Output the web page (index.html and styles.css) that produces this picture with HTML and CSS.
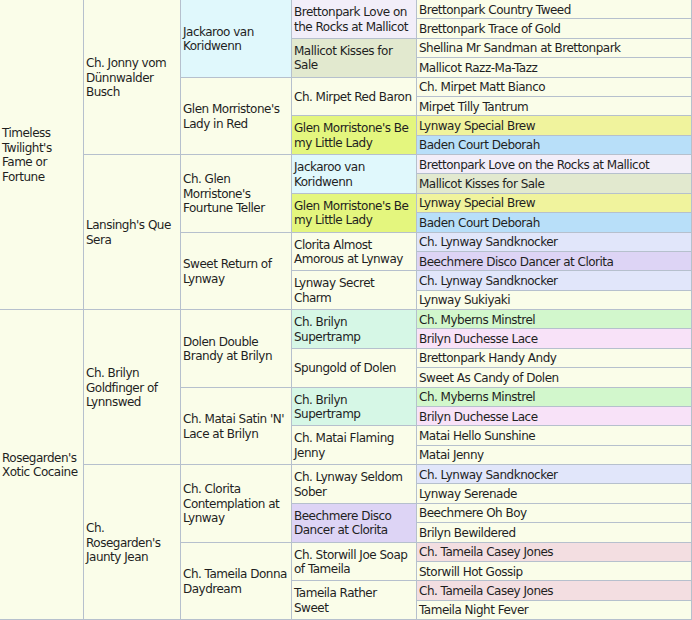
FILE: index.html
```html
<!DOCTYPE html>
<html lang="en">
<head>
<meta charset="utf-8">
<title>Pedigree</title>
<link rel="stylesheet" href="styles.css">
</head>
<body>
<div class="pedigree">
  <div class="cell g1">Timeless Twilight's Fame or Fortune</div>
  <div class="cell g2">Ch. Jonny vom Dünnwalder Busch</div>
  <div class="cell g3 c-cyan">Jackaroo van Koridwenn</div>
  <div class="cell g4 c-lav">Brettonpark Love on the Rocks at Mallicot</div>
  <div class="cell g5">Brettonpark Country Tweed</div>
  <div class="cell g5">Brettonpark Trace of Gold</div>
  <div class="cell g4 c-sage">Mallicot Kisses for Sale</div>
  <div class="cell g5">Shellina Mr Sandman at Brettonpark</div>
  <div class="cell g5">Mallicot Razz-Ma-Tazz</div>
  <div class="cell g3">Glen Morristone's Lady in Red</div>
  <div class="cell g4">Ch. Mirpet Red Baron</div>
  <div class="cell g5">Ch. Mirpet Matt Bianco</div>
  <div class="cell g5">Mirpet Tilly Tantrum</div>
  <div class="cell g4 c-lime">Glen Morristone's Be my Little Lady</div>
  <div class="cell g5 c-yellow">Lynway Special Brew</div>
  <div class="cell g5 c-blue">Baden Court Deborah</div>
  <div class="cell g2">Lansingh's Que Sera</div>
  <div class="cell g3">Ch. Glen Morristone's Fourtune Teller</div>
  <div class="cell g4 c-cyan">Jackaroo van Koridwenn</div>
  <div class="cell g5 c-lav">Brettonpark Love on the Rocks at Mallicot</div>
  <div class="cell g5 c-sage">Mallicot Kisses for Sale</div>
  <div class="cell g4 c-lime">Glen Morristone's Be my Little Lady</div>
  <div class="cell g5 c-yellow">Lynway Special Brew</div>
  <div class="cell g5 c-blue">Baden Court Deborah</div>
  <div class="cell g3">Sweet Return of Lynway</div>
  <div class="cell g4">Clorita Almost Amorous at Lynway</div>
  <div class="cell g5 c-peri">Ch. Lynway Sandknocker</div>
  <div class="cell g5 c-purple">Beechmere Disco Dancer at Clorita</div>
  <div class="cell g4">Lynway Secret Charm</div>
  <div class="cell g5 c-peri">Ch. Lynway Sandknocker</div>
  <div class="cell g5">Lynway Sukiyaki</div>
  <div class="cell g1">Rosegarden's Xotic Cocaine</div>
  <div class="cell g2">Ch. Brilyn Goldfinger of Lynnswed</div>
  <div class="cell g3">Dolen Double Brandy at Brilyn</div>
  <div class="cell g4 c-mint">Ch. Brilyn Supertramp</div>
  <div class="cell g5 c-green">Ch. Myberns Minstrel</div>
  <div class="cell g5 c-pink">Brilyn Duchesse Lace</div>
  <div class="cell g4">Spungold of Dolen</div>
  <div class="cell g5">Brettonpark Handy Andy</div>
  <div class="cell g5">Sweet As Candy of Dolen</div>
  <div class="cell g3">Ch. Matai Satin 'N' Lace at Brilyn</div>
  <div class="cell g4 c-mint">Ch. Brilyn Supertramp</div>
  <div class="cell g5 c-green">Ch. Myberns Minstrel</div>
  <div class="cell g5 c-pink">Brilyn Duchesse Lace</div>
  <div class="cell g4">Ch. Matai Flaming Jenny</div>
  <div class="cell g5">Matai Hello Sunshine</div>
  <div class="cell g5">Matai Jenny</div>
  <div class="cell g2">Ch. Rosegarden's Jaunty Jean</div>
  <div class="cell g3">Ch. Clorita Contemplation at Lynway</div>
  <div class="cell g4">Ch. Lynway Seldom Sober</div>
  <div class="cell g5 c-peri">Ch. Lynway Sandknocker</div>
  <div class="cell g5">Lynway Serenade</div>
  <div class="cell g4 c-purple">Beechmere Disco Dancer at Clorita</div>
  <div class="cell g5">Beechmere Oh Boy</div>
  <div class="cell g5">Brilyn Bewildered</div>
  <div class="cell g3">Ch. Tameila Donna Daydream</div>
  <div class="cell g4">Ch. Storwill Joe Soap of Tameila</div>
  <div class="cell g5 c-rose">Ch. Tameila Casey Jones</div>
  <div class="cell g5">Storwill Hot Gossip</div>
  <div class="cell g4">Tameila Rather Sweet</div>
  <div class="cell g5 c-rose">Ch. Tameila Casey Jones</div>
  <div class="cell g5">Tameila Night Fever</div>
</div>
</body>
</html>
```
FILE: styles.css
```css
html, body {
  margin: 0;
  padding: 0;
  background: #fafde9;
  overflow: hidden;
}

.pedigree {
  display: grid;
  grid-template-columns: 84px 97px 111px 125px 1fr;
  grid-template-rows: repeat(32, 19.375px);
  width: 692px;
  font-family: "DejaVu Sans", Verdana, sans-serif;
  font-size: 12px;
  letter-spacing: -0.5px;
  line-height: 14.5px;
  color: #1f1f1f;
  background: #fafde9;
}

.cell {
  display: flex;
  align-items: center;
  padding: 1.5px 2px 0 2px;
  border-right: 1px solid #b6c0cd;
  border-bottom: 1px solid #b6c0cd;
  background: #fafde9;
  min-width: 0;
  overflow: hidden;
}

.g1 { grid-column: 1; grid-row: span 16; }
.g2 { grid-column: 2; grid-row: span 8; }
.g3 { grid-column: 3; grid-row: span 4; }
.g4 { grid-column: 4; grid-row: span 2; }
.g5 { grid-column: 5; grid-row: span 1; white-space: nowrap; }

.c-cyan { background: #e0f8fc; }
.c-lav { background: #f2eef9; }
.c-sage { background: #e2e9cf; }
.c-lime { background: #e4f67e; }
.c-yellow { background: #f0f39d; }
.c-blue { background: #b8dff9; }
.c-peri { background: #e1e6fa; }
.c-purple { background: #ddd4f5; }
.c-mint { background: #d6f7e6; }
.c-green { background: #d2f7cc; }
.c-pink { background: #f8e2f8; }
.c-rose { background: #f3dee1; }
```
